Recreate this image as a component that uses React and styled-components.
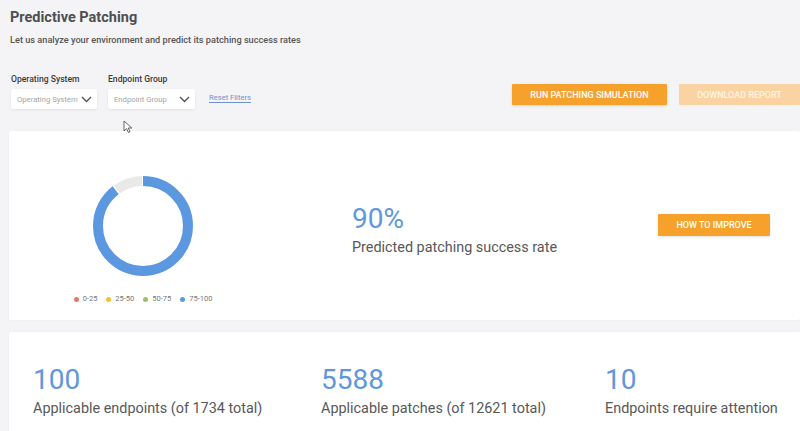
import React from 'react';
import styled, { createGlobalStyle } from 'styled-components';

const GlobalStyle = createGlobalStyle`
  body {
    margin: 0;
    background: #f4f4f6;
    font-family: Roboto, "Liberation Sans", sans-serif;
    overflow: hidden;
  }
`

const Page = styled.div`
  position: relative;
  width: 800px;
  height: 431px;
  padding-left: 9px;
  box-sizing: border-box;
  overflow: hidden;
`

const Title = styled.h1`
  margin: 0;
  padding: 9px 0 0 1px;
  font-size: 14.5px;
  line-height: 18px;
  font-weight: 700;
  color: #4f4f52;
`

const Subtitle = styled.p`
  margin: 7px 0 0 1px;
  font-size: 9.2px;
  line-height: 12px;
  font-weight: 500;
  color: #555;
`

const Toolbar = styled.div`
  display: flex;
  align-items: flex-start;
  margin-top: 28px;
`

const Filters = styled.div`
  display: flex;
  align-items: flex-end;
  gap: 9px;
  flex: 1;
`

const Field = styled.div`
  display: flex;
  flex-direction: column;
  gap: 4px;
`

const Label = styled.label`
  font-size: 8.6px;
  line-height: 11px;
  font-weight: 500;
  color: #3a3a3a;
  padding-left: 2px;
`

const Select = styled.div`
  display: flex;
  align-items: center;
  justify-content: space-between;
  width: ${p => p.w}px;
  height: 20px;
  margin-left: 2px;
  padding: 0 5px 0 6px;
  box-sizing: border-box;
  background: #fff;
  box-shadow: 0 1px 3px rgba(0, 0, 0, 0.08);
  border-radius: 2px;
  font-size: 7.7px;
  color: #a5a5a8;
  white-space: nowrap;
`

const ResetLink = styled.a`
  font-size: 7.6px;
  color: #6f92c8;
  text-decoration: underline;
  text-underline-offset: 2px;
  margin: 0 0 7px 5px;
`

const Actions = styled.div`
  display: flex;
  gap: 12px;
  margin-top: 10px;
`

const Button = styled.button`
  width: ${p => p.w}px;
  height: 21px;
  padding: 0;
  border: 0;
  border-radius: 1px;
  background: ${p => (p.faded ? '#f9d4a2' : '#f5a12c')};
  color: ${p => (p.faded ? '#fff3e4' : '#fff')};
  font-family: Roboto, "Liberation Sans", sans-serif;
  font-size: 9px;
  font-weight: 500;
  text-transform: uppercase;
  box-shadow: ${p => (p.faded ? 'none' : '0 1px 3px rgba(0,0,0,0.12)')};
  white-space: nowrap;
`

const Card = styled.section`
  display: flex;
  align-items: flex-start;
  background: #fff;
  border-radius: 2px;
  box-shadow: 0 0 2px rgba(0, 0, 0, 0.05);
  margin-top: ${p => p.mt}px;
  height: ${p => p.h}px;
`

const ChartCol = styled.div`
  width: 268px;
  display: flex;
  flex-direction: column;
  align-items: center;
  padding-top: 45px;
`

const Legend = styled.div`
  display: flex;
  gap: 9px;
  margin-top: 18px;
  font-size: 7.5px;
  line-height: 10px;
  color: #777;
`

const LegendItem = styled.span`
  display: flex;
  align-items: center;
  gap: 4px;
  &::before {
    content: '';
    width: 5px;
    height: 5px;
    border-radius: 50%;
    background: ${p => p.color};
  }
`

const RateBlock = styled.div`
  flex: 1;
  margin-left: 75px;
  padding-top: 72px;
`

const BigNumber = styled.div`
  font-size: 28px;
  line-height: 32px;
  font-weight: 400;
  color: #5f97dc;
`

const Caption = styled.div`
  margin-top: 4px;
  font-size: 14.4px;
  line-height: 18px;
  color: #58585a;
`

const ImproveButton = styled(Button)`
  margin: 83px 30px 0 0;
  height: 22px;
`

const Stats = styled.div`
  display: grid;
  grid-template-columns: 288px 284px 1fr;
  padding: 32px 0 0 24px;
  width: 100%;
`

const Cursor = styled.svg`
  position: absolute;
  left: 123px;
  top: 120px;
`

const Donut = ({ value }) => {
  const r = 45;
  const c = 2 * Math.PI * r;
  const gap = 1.5;
  const blue = (value / 100) * c - gap;
  const grey = c - blue - 2 * gap;
  return (
    <svg width="100" height="100" viewBox="0 0 100 100">
      <g transform="rotate(-90 50 50)">
        <circle cx="50" cy="50" r={r} fill="none" stroke="#5b98e0" strokeWidth="10"
          strokeDasharray={`${blue} ${c - blue}`} />
        <circle cx="50" cy="50" r={r} fill="none" stroke="#e9e9ea" strokeWidth="10"
          strokeDasharray={`${grey} ${c - grey}`} strokeDashoffset={-(blue + gap)} />
      </g>
    </svg>
  );
};

const Chevron = () => (
  <svg width="11" height="7" viewBox="0 0 11 7">
    <path d="M1 1l4.5 4.5L10 1" fill="none" stroke="#555" strokeWidth="1.4" />
  </svg>
);

const stats = [
  { n: 100, label: 'Applicable endpoints (of 1734 total)' },
  { n: 5588, label: 'Applicable patches (of 12621 total)' },
  { n: 10, label: 'Endpoints require attention' },
];

export default function App() {
  return (
    <Page>
      <GlobalStyle />
      <Title>Predictive Patching</Title>
      <Subtitle>Let us analyze your environment and predict its patching success rates</Subtitle>

      <Toolbar>
        <Filters>
          <Field>
            <Label>Operating System</Label>
            <Select w={86}>Operating System <Chevron /></Select>
          </Field>
          <Field>
            <Label>Endpoint Group</Label>
            <Select w={87}>Endpoint Group <Chevron /></Select>
          </Field>
          <ResetLink>Reset Filters</ResetLink>
        </Filters>
        <Actions>
          <Button w={155}>Run Patching Simulation</Button>
          <Button w={121} faded>Download Report</Button>
        </Actions>
      </Toolbar>

      <Card mt={22} h={189}>
        <ChartCol>
          <Donut value={90} />
          <Legend>
            <LegendItem color="#e4796b">0-25</LegendItem>
            <LegendItem color="#f2c22e">25-50</LegendItem>
            <LegendItem color="#9dbf6b">50-75</LegendItem>
            <LegendItem color="#5b98e0">75-100</LegendItem>
          </Legend>
        </ChartCol>
        <RateBlock>
          <BigNumber>90%</BigNumber>
          <Caption>Predicted patching success rate</Caption>
        </RateBlock>
        <ImproveButton w={112}>How to improve</ImproveButton>
      </Card>

      <Card mt={12} h={120}>
        <Stats>
          {stats.map(s => (
            <div key={s.n}>
              <BigNumber>{s.n}</BigNumber>
              <Caption>{s.label}</Caption>
            </div>
          ))}
        </Stats>
      </Card>

      <Cursor width="10" height="13" viewBox="0 0 10 13">
        <path d="M1 1v10l2.6-2.4 1.8 3.9 1.6-.7-1.8-3.8H8.8z" fill="#fff" stroke="#555" strokeWidth="0.9" />
      </Cursor>
    </Page>
  );
}
